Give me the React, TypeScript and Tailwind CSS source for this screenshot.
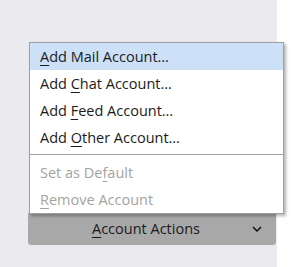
import type { ReactNode } from "react";

type Item = { label: ReactNode; disabled?: boolean; active?: boolean };

function U({ children }: { children: ReactNode }) {
  return <span className="underline decoration-1 underline-offset-[3px]">{children}</span>;
}

const addItems: Item[] = [
  { label: <><U>A</U>dd Mail Account…</>, active: true },
  { label: <>Add <U>C</U>hat Account…</> },
  { label: <>Add <U>F</U>eed Account…</> },
  { label: <>Add <U>O</U>ther Account…</> },
];

const otherItems: Item[] = [
  { label: <>Set as De<U>f</U>ault</>, disabled: true },
  { label: <><U>R</U>emove Account</>, disabled: true },
];

function MenuRow({ item }: { item: Item }) {
  return (
    <div
      className={
        "flex h-[27px] items-center pl-[10px] " +
        (item.active ? "bg-[#cce1f8] " : "") +
        (item.disabled ? "text-[#a3a3a3]" : "text-[#1b1b1b]")
      }
    >
      <span className="whitespace-pre">{item.label}</span>
    </div>
  );
}

export default function App() {
  return (
    <div
      className="flex h-[267px] w-[302px] bg-white"
      style={{ fontFamily: '"Open Sans", "Noto Sans", sans-serif' }}
    >
      <div className="relative flex h-full w-[277px] flex-col bg-[#ebeaef] pl-[28px] pt-[213px]">
        <button className="flex h-[32px] w-[248px] items-center rounded-b-[3px] bg-[#a8a8a8] text-[14.5px] text-[#1b1b1b]">
          <span className="flex-1 pl-[12px] text-center">
            <U>A</U>ccount Actions
          </span>
          <svg width="10" height="6" viewBox="0 0 10 6" className="mr-[14px]">
            <path d="M1 1l4 4 4-4" fill="none" stroke="#111" strokeWidth="1.5" />
          </svg>
        </button>

        <div className="absolute left-[29px] top-[42px] w-[255px] border border-[#a0a0a0] bg-white text-[14.5px] shadow-[2px_2px_3px_rgba(0,0,0,0.3)]">
          {addItems.map((it, i) => (
            <MenuRow key={i} item={it} />
          ))}
          <div className="mb-[4px] mt-[3px] h-px bg-[#a0a0a0]" />
          {otherItems.map((it, i) => (
            <MenuRow key={i} item={it} />
          ))}
        </div>
      </div>
    </div>
  );
}
